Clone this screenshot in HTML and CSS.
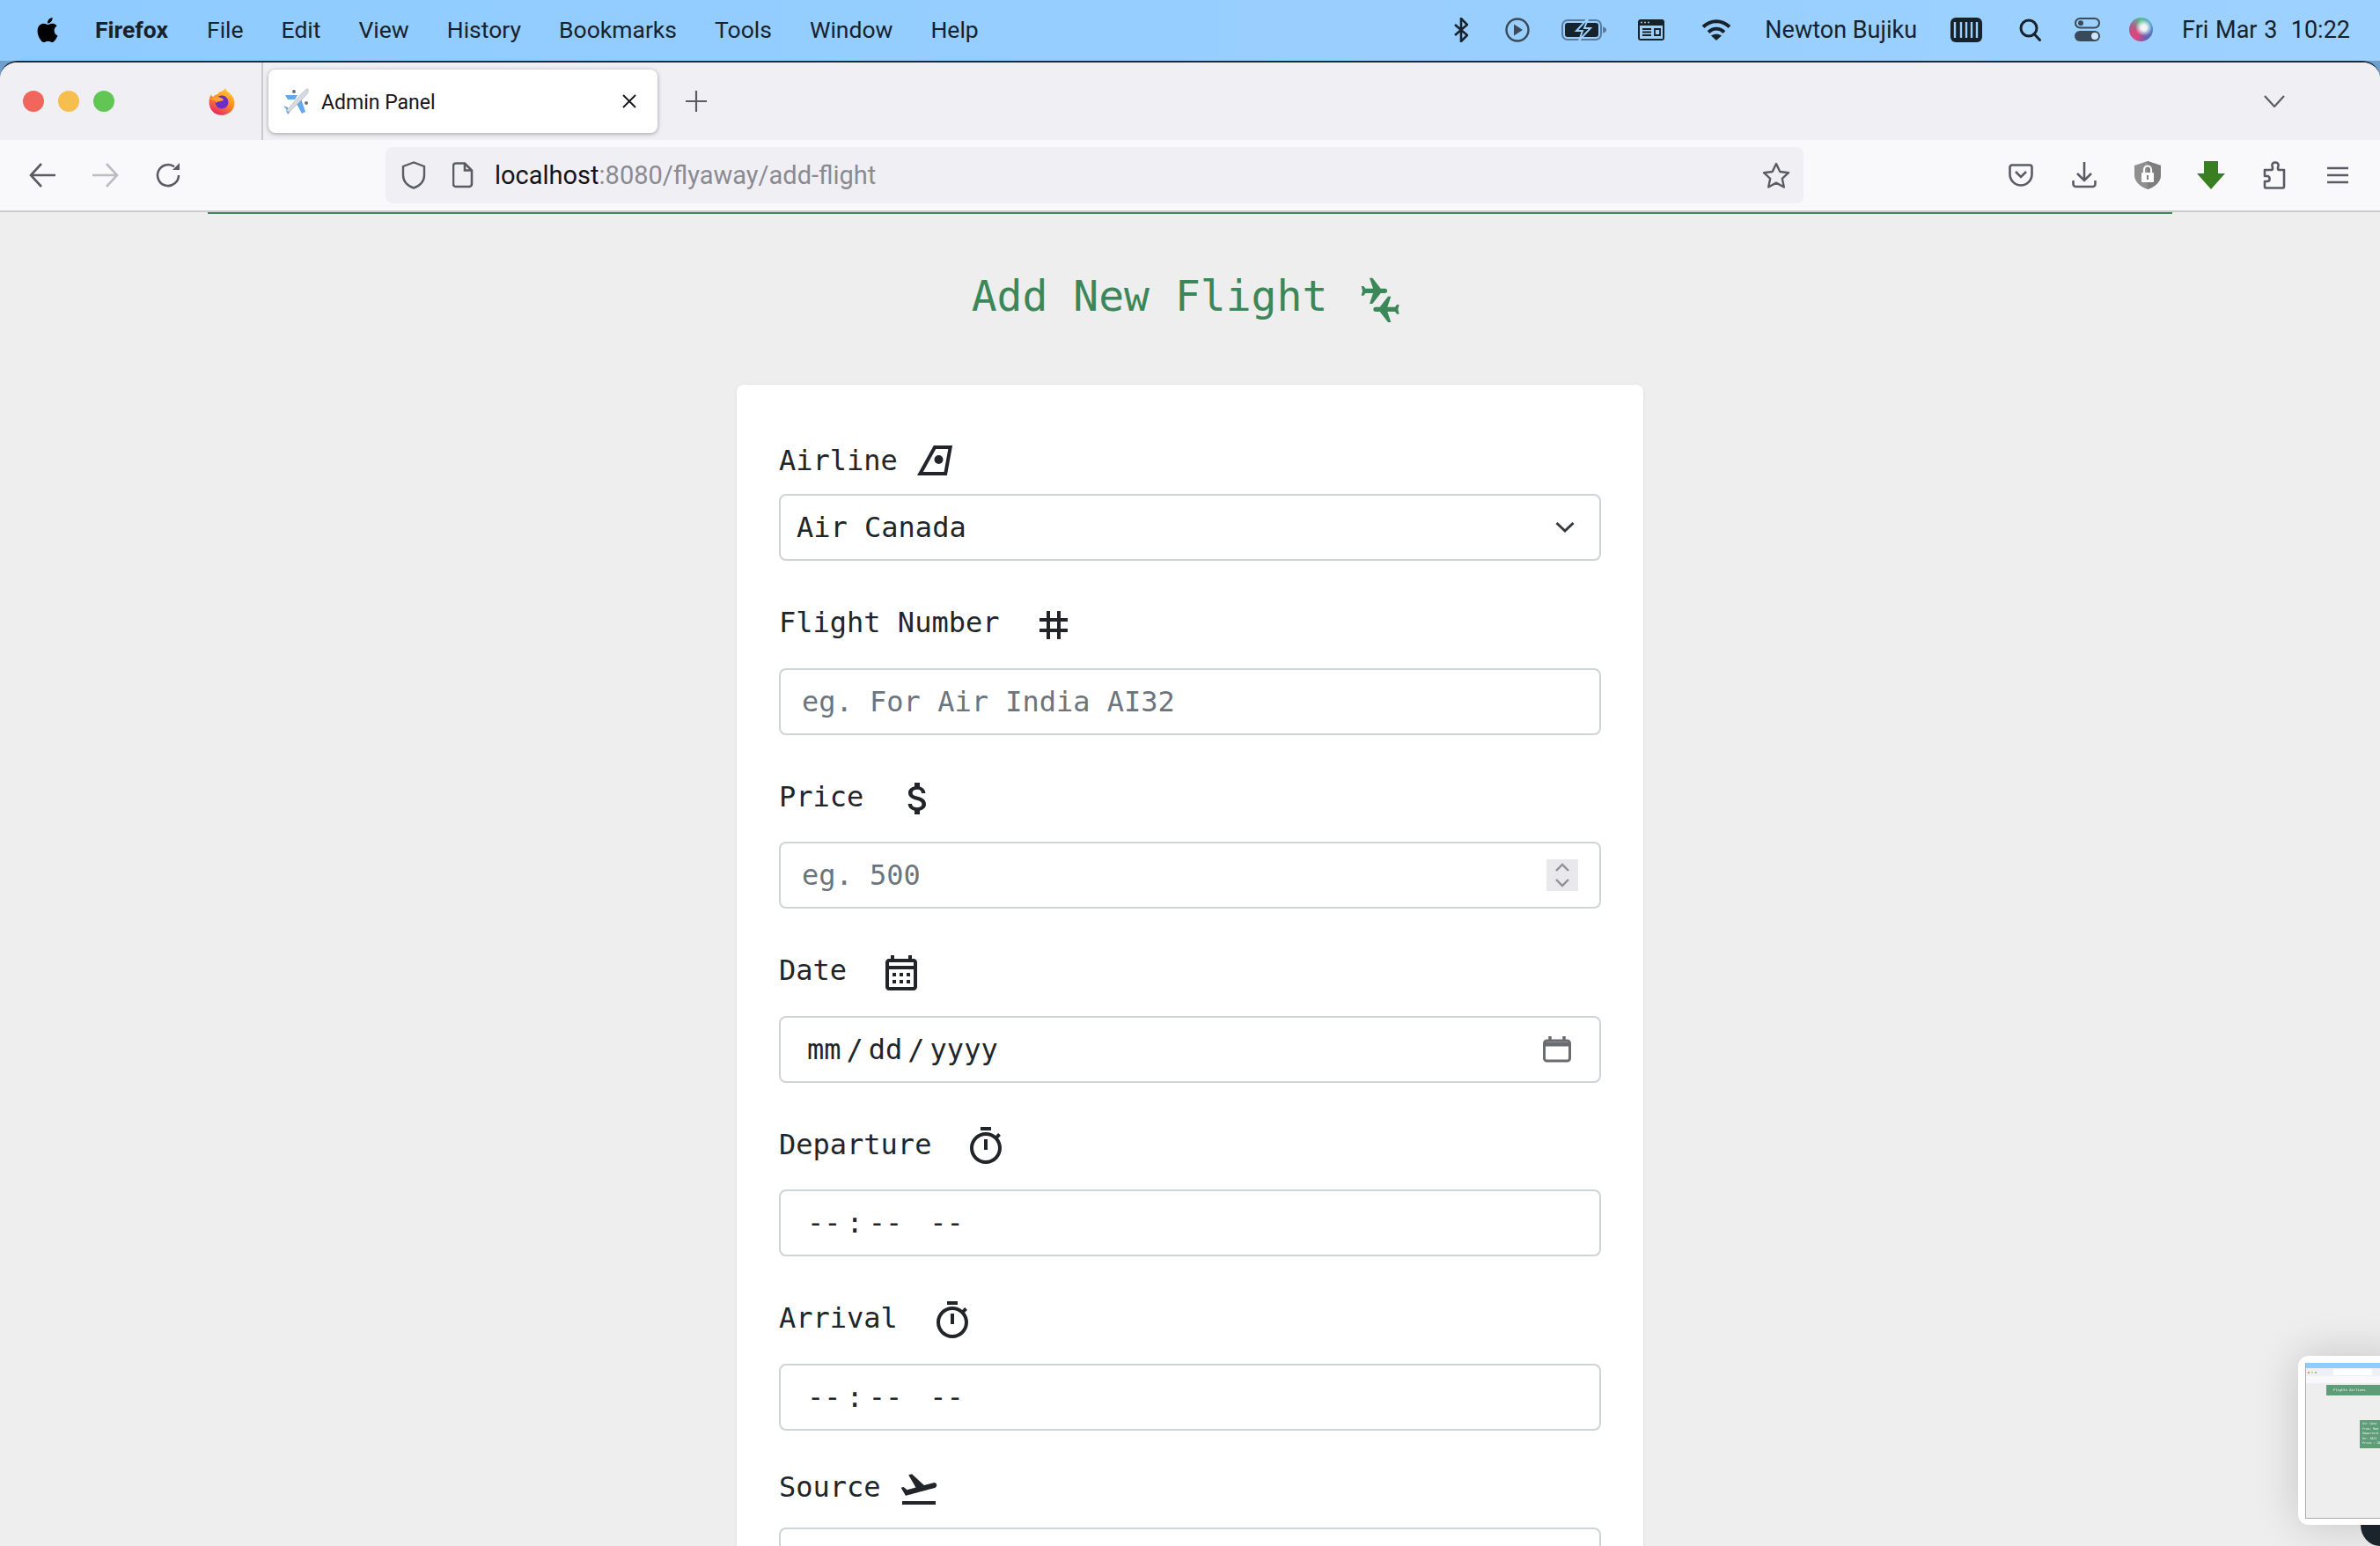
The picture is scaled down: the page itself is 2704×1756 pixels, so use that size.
FILE: index.html

```html
<!DOCTYPE html>
<html lang="en">
<head>
  <meta charset="UTF-8" />
  <title>Admin Panel</title>
  <link rel="stylesheet" href="styles.css">
</head>
<body>
  <header class="menubar">
    <div class="menu-left">
      <svg class="apple" viewBox="0 0 24 24"><path d="M12.152 6.896c-.948 0-2.415-1.078-3.96-1.04-2.04.027-3.91 1.183-4.961 3.014-2.117 3.675-.546 9.103 1.519 12.09 1.013 1.454 2.208 3.09 3.792 3.039 1.52-.065 2.09-.987 3.935-.987 1.831 0 2.35.987 3.96.948 1.637-.026 2.676-1.48 3.676-2.948 1.156-1.688 1.636-3.325 1.662-3.415-.039-.013-3.182-1.221-3.22-4.857-.026-3.04 2.48-4.494 2.597-4.559-1.429-2.09-3.623-2.324-4.39-2.376-2-.156-3.675 1.09-4.61 1.09zM15.53 3.83c.843-1.012 1.4-2.427 1.245-3.83-1.207.052-2.662.805-3.532 1.818-.78.896-1.454 2.338-1.273 3.714 1.338.104 2.715-.688 3.559-1.701"/></svg>
      <span class="app-name">Firefox</span>
      <span>File</span>
      <span>Edit</span>
      <span>View</span>
      <span>History</span>
      <span>Bookmarks</span>
      <span>Tools</span>
      <span>Window</span>
      <span>Help</span>
    </div>
    <div class="menu-right">
      <svg class="st-first" width="16" height="28" viewBox="0 0 16 28" fill="none" stroke="#18222b" stroke-width="2.6"><path d="M1 8l14 12-7 7V1l7 7L1 20"/></svg>
      <svg class="st-wide" width="28" height="28" viewBox="0 0 28 28"><circle cx="14" cy="14" r="12.5" fill="none" stroke="#3b4a58" stroke-width="2.4"/><path d="M10 7.5L20 14l-10 6.5z" fill="#3b4a58"/></svg>
      <svg class="st-mid" width="51" height="24" viewBox="0 0 51 24"><rect x="1" y="1" width="44" height="22" rx="6" fill="none" stroke="#5b7c9c" stroke-width="2"/><rect x="4" y="4" width="38" height="16" rx="3" fill="#18222b"/><path d="M47 8l4 2.500v3l-4 2.500z" fill="#5b7c9c"/><path d="M29 0L17 13h7l-4 11 13-14h-7l4-10z" fill="#18222b" stroke="#9cd0ff" stroke-width="2"/></svg>
      <svg class="st-mid" width="30" height="24" viewBox="0 0 30 24"><rect width="30" height="24" rx="3" fill="#18222b"/><rect x="2" y="7" width="26" height="15" fill="#9cd0ff"/><path d="M5 11h10M5 14.500h10M5 18h10M19 11h6v7h-6z" stroke="#18222b" stroke-width="1.800" fill="none"/><circle cx="4" cy="3.500" r="1" fill="#9cd0ff"/><circle cx="8" cy="3.500" r="1" fill="#9cd0ff"/><circle cx="12" cy="3.500" r="1" fill="#9cd0ff"/></svg>
      <svg class="st-wide" width="34" height="24" viewBox="0 0 34 24" fill="none" stroke="#18222b" stroke-width="4"><path d="M2 8.500C11 0 23 0 32 8.500"/><path d="M8 14.500c5.500-5 12.500-5 18 0"/><path d="M17 24l-6-5.500c3.500-2.500 8.500-2.500 12 0z" fill="#18222b" stroke="none"/></svg>
      <span class="st status-text">Newton Bujiku</span>
      <svg class="st" width="36" height="28" viewBox="0 0 36 28"><rect width="36" height="28" rx="6" fill="#18222b"/><path d="M5 5v18M12 5v18M18 5v18M24 5v18M30 5v18" stroke="#9cd0ff" stroke-width="2.400"/></svg>
      <svg class="st-wide" width="25" height="26" viewBox="0 0 25 26" fill="none" stroke="#18222b" stroke-width="3"><circle cx="11" cy="11" r="9"/><path d="M17 17.500l6.500 7" stroke-linecap="round"/></svg>
      <svg class="st" width="29" height="27" viewBox="0 0 29 27"><rect x="1" y="1" width="27" height="10.500" rx="5.200" fill="none" stroke="#3b4a58" stroke-width="2"/><circle cx="7" cy="6.200" r="3" fill="#3b4a58"/><rect y="15" width="29" height="12" rx="6" fill="#3b4a58"/><circle cx="23" cy="21" r="4" fill="#cfe6fb"/></svg>
      <div class="siri st-tight"></div>
      <span class="st-tight status-text clock">Fri Mar 3  10:22</span>
    </div>
  </header>

  <div class="window">
    <div class="tabbar">
      <div class="lights">
        <span class="light light-red"></span>
        <span class="light light-yellow"></span>
        <span class="light light-green"></span>
      </div>
      <svg class="ff-logo" width="30" height="31" viewBox="0 0 30 31">
        <defs><linearGradient id="ffg" x1="0.8" y1="0" x2="0.3" y2="1"><stop offset="0" stop-color="#ffd43a"/><stop offset="0.5" stop-color="#ff8a1f"/><stop offset="1" stop-color="#e5246b"/></linearGradient></defs>
        <path d="M19 0c1 4 5 5 8 9 4 6 3 14-2 18-6 5-15 5-20 0C0 22-1 14 3 7c0 2 1 3 2 3 2-2 4-3 6-3-1-3 5-2 8-7z" fill="url(#ffg)"/>
        <circle cx="15" cy="16" r="7.500" fill="#6b2fc7"/>
        <path d="M2 13c3-3 8-4 12-2 2 1 3 2 3 3-3 1-7 1-9 3 1-3-3-4-6-4z" fill="#ffa22e"/>
      </svg>
      <div class="tab-sep"></div>
      <div class="tab">
        <svg width="30" height="31" viewBox="0 0 30 31">
          <path d="M3 8h14l-3 5-8 0zM21 12l5 15-4 2-6-11z" fill="#63a9ec"/>
          <path d="M1 20l5 2 1 6-6-8zM4 26l6-1-4 5z" fill="#63a9ec"/>
          <path d="M29 1c1 3-1 6-3 8L8 27l-4-1L21 7c2-2 5-6 8-6z" fill="#d5dbe0" stroke="#a9b2ba" stroke-width="0.6"/>
          <circle cx="13" cy="4" r="2" fill="#6b7278"/><circle cx="27" cy="17" r="2" fill="#6b7278"/>
        </svg>
        <span class="tab-title">Admin Panel</span>
        <svg class="tab-close" width="16" height="16" viewBox="0 0 16 16" fill="none" stroke="#15141a" stroke-width="1.800"><path d="M1 1l14 14M15 1L1 15"/></svg>
      </div>
      <svg class="tab-plus" width="24" height="24" viewBox="0 0 24 24" fill="none" stroke="#5b5b66" stroke-width="2.200"><path d="M12 0v24M0 12h24"/></svg>
      <svg class="tab-list" width="24" height="14" viewBox="0 0 24 14" fill="none" stroke="#5b5b66" stroke-width="2.200"><path d="M1 1l11 12L23 1"/></svg>
    </div>

    <div class="toolbar">
      <div class="tool"><svg width="30" height="28" viewBox="0 0 30 28" fill="none" stroke="#5b5b66" stroke-width="2.600"><path d="M14 1L2 14l12 13M2 14h28"/></svg></div>
      <div class="tool"><svg width="30" height="28" viewBox="0 0 30 28" fill="none" stroke="#bcbcc2" stroke-width="2.600"><path d="M16 1l12 13-12 13M28 14H0"/></svg></div>
      <div class="tool"><svg width="30" height="30" viewBox="0 0 30 30" fill="none" stroke="#5b5b66" stroke-width="2.600"><path d="M26 15a12 12 0 1 1-5-9.700"/><path d="M27 1v8h-8z" fill="#5b5b66" stroke="none"/></svg></div>
      <div class="urlbar">
        <svg class="url-shield" width="28" height="32" viewBox="0 0 28 32" fill="none" stroke="#5b5b66" stroke-width="2.400"><path d="M14 1.500L2 6v10c0 7 5 12 12 14.500C21 28 26 23 26 16V6z"/></svg>
        <svg class="url-page" width="24" height="30" viewBox="0 0 24 30" fill="none" stroke="#5b5b66" stroke-width="2.600"><path d="M4 1.500h10l8 8V25a3 3 0 0 1-3 3H4a3 3 0 0 1-3-3V4a3 3 0 0 1 3-2.500zM14 1.500v8h8"/></svg>
        <span class="url-text"><span class="url-host">localhost</span>:8080/flyaway/add-flight</span>
        <svg class="url-star" width="32" height="30" viewBox="0 0 32 30" fill="none" stroke="#5b5b66" stroke-width="2.400" stroke-linejoin="round"><path d="M16 2l4.300 9 9.700 1.200-7.200 6.600 2 9.700L16 23.600l-8.800 4.900 2-9.700L2 12.200 11.700 11z"/></svg>
      </div>
      <div class="tools-right">
        <div class="tool"><svg width="28" height="26" viewBox="0 0 28 26" fill="none" stroke="#5b5b66" stroke-width="2.600"><path d="M4 1.500h20a2.500 2.500 0 0 1 2.500 2.500v8c0 7-6 12.500-12.500 12.500S1.500 19 1.500 12V4A2.500 2.500 0 0 1 4 1.500z"/><path d="M8 9l6 6 6-6"/></svg></div>
        <div class="tool"><svg width="28" height="30" viewBox="0 0 28 30" fill="none" stroke="#5b5b66" stroke-width="2.600"><path d="M14 0v21M6 13l8 8 8-8M1.500 21v4a3 3 0 0 0 3 3h19a3 3 0 0 0 3-3v-4"/></svg></div>
        <div class="tool"><svg width="30" height="32" viewBox="0 0 30 32"><path d="M15 0L0 5v11c0 7 6 13 15 16 9-3 15-9 15-16V5z" fill="#8f8f8f"/><path d="M15 0v32c9-3 15-9 15-16V5z" fill="#7d7d7d"/><rect x="8" y="13" width="14" height="11" rx="1" fill="#fff"/><path d="M11 13V9.500a4 4 0 0 1 8 0V13" fill="none" stroke="#fff" stroke-width="2.200"/><rect x="14" y="16" width="2" height="5" fill="#7d7d7d"/></svg></div>
        <div class="tool"><svg width="32" height="32" viewBox="0 0 32 32"><path d="M8 0h16v14h8L16 32 0 14h8z" fill="#3a7e22"/></svg></div>
        <div class="tool"><svg width="26" height="32" viewBox="0 0 26 32" fill="none" stroke="#5b5b66" stroke-width="2.600" stroke-linejoin="round"><path d="M2 10h7c3 0 2-3 1.500-4.500C10 3 11.500 1.500 14 1.500S18 3 17.500 5.500C17 7 16 10 19 10h5v19a1.500 1.500 0 0 1-1.500 1.500H3.500A1.500 1.500 0 0 1 2 29v-6h3c3.500 0 3.500-6 0-6H2z"/></svg></div>
        <div class="tool"><svg width="24" height="20" viewBox="0 0 24 20" fill="none" stroke="#5b5b66" stroke-width="2.600"><path d="M0 2h24M0 10h24M0 18h24"/></svg></div>
      </div>
    </div>

    <main class="page">
      <div class="nav-edge"></div>
      <h2 class="page-title">
        <span class="page-title-text">Add New Flight</span>
        <svg width="80" height="80" viewBox="0 0 240 240" fill="#3b8759">
          <path d="M80 102h8l6 8h26l-12-36h10l28 36h14a8 8 0 0 1 0 16h-14l-28 36h-10l12-36H94l-6 8h-8l4-16z"/>
          <path transform="translate(165 181) rotate(180) translate(-124 -118)" d="M80 102h8l6 8h26l-12-36h10l28 36h14a8 8 0 0 1 0 16h-14l-28 36h-10l12-36H94l-6 8h-8l4-16z"/>
        </svg>
      </h2>

      <form class="card" onsubmit="return false;">
        <div class="field">
          <label class="field-label field-label-short">Airline
            <svg class="icon-tight" width="40" height="34" viewBox="0 0 40 34" fill="none" stroke="#212529" stroke-width="4"><path d="M20 2h17.700l-5.500 30H3.400z"/><circle cx="24.500" cy="16" r="5" fill="#212529" stroke="none"/></svg>
          </label>
          <div class="box box-select">
            <span>Air Canada</span>
            <svg width="22" height="14" viewBox="0 0 22 14" fill="none" stroke="#343a40" stroke-width="3"><path d="M1.500 2L11 11l9.500-9"/></svg>
          </div>
        </div>

        <div class="field">
          <label class="field-label">Flight Number
            <svg class="icon" width="48" height="48" viewBox="0 0 24 24" fill="#212529"><path d="M20 10V8h-4V4h-2v4h-4V4H8v4H4v2h4v4H4v2h4v4h2v-4h4v4h2v-4h4v-2h-4v-4h4zm-6 4h-4v-4h4v4z"/></svg>
          </label>
          <div class="box"><input class="box-input" type="text" placeholder="eg. For Air India AI32"></div>
        </div>

        <div class="field">
          <label class="field-label">Price
            <svg class="icon" width="48" height="48" viewBox="0 0 24 24" fill="#212529"><path d="M11.800 10.900c-2.270-.590-3-1.200-3-2.150 0-1.090 1.010-1.850 2.700-1.850 1.780 0 2.440.850 2.500 2.100h2.210c-.070-1.720-1.120-3.300-3.210-3.810V3h-3v2.160c-1.940.420-3.500 1.680-3.500 3.610 0 2.310 1.910 3.460 4.700 4.130 2.500.600 3 1.480 3 2.410 0 .690-.490 1.790-2.700 1.790-2.060 0-2.870-.920-2.980-2.100h-2.200c.120 2.190 1.760 3.420 3.680 3.830V21h3v-2.150c1.950-.370 3.500-1.500 3.500-3.550 0-2.840-2.430-3.810-4.700-4.400z"/></svg>
          </label>
          <div class="box">
            <input class="box-input" type="text" placeholder="eg. 500">
            <span class="stepper">
              <svg width="16" height="30" viewBox="0 0 16 30" fill="none" stroke="#8f8f9d" stroke-width="2.400"><path d="M1 10l7-7 7 7M1 20l7 7 7-7"/></svg>
            </span>
          </div>
        </div>

        <div class="field">
          <label class="field-label">Date
            <svg class="icon" width="48" height="48" viewBox="0 0 24 24" fill="#212529"><path d="M19 4h-1V2h-2v2H8V2H6v2H5c-1.110 0-1.990.9-1.990 2L3 20c0 1.100.89 2 2 2h14c1.100 0 2-.9 2-2V6c0-1.100-.9-2-2-2zm0 16H5V10h14v10zm0-12H5V6h14v2zM9 14H7v-2h2v2zm4 0h-2v-2h2v2zm4 0h-2v-2h2v2zm-8 4H7v-2h2v2zm4 0h-2v-2h2v2zm4 0h-2v-2h2v2z"/></svg>
          </label>
          <div class="box box-segments">
            <span class="segs"><span>mm</span><span class="sep">/</span><span>dd</span><span class="sep">/</span><span>yyyy</span></span>
            <svg class="date-btn" width="32" height="30" viewBox="0 0 32 30" fill="none" stroke="#6b6b72" stroke-width="3"><rect x="1.500" y="5" width="29" height="23" rx="3"/><path d="M2 9h28" stroke-width="5"/><path d="M8 0v5M24 0v5" stroke-width="3.500"/></svg>
          </div>
        </div>

        <div class="field">
          <label class="field-label">Departure
            <svg class="icon" width="48" height="48" viewBox="0 0 24 24" fill="#212529"><path d="M15 1H9v2h6V1zm-4 13h2V8h-2v6zm8.030-6.610l1.420-1.420c-.43-.51-.9-.99-1.410-1.410l-1.420 1.420C16.070 4.740 14.120 4 12 4c-4.970 0-9 4.030-9 9s4.020 9 9 9 9-4.030 9-9c0-2.120-.74-4.070-1.970-5.610zM12 20c-3.870 0-7-3.130-7-7s3.130-7 7-7 7 3.130 7 7-3.130 7-7 7z"/></svg>
          </label>
          <div class="box box-segments">
            <span class="segs"><span>--</span><span class="sep">:</span><span>--</span><span class="ampm">--</span></span>
          </div>
        </div>

        <div class="field">
          <label class="field-label">Arrival
            <svg class="icon" width="48" height="48" viewBox="0 0 24 24" fill="#212529"><path d="M15 1H9v2h6V1zm-4 13h2V8h-2v6zm8.030-6.610l1.420-1.420c-.43-.51-.9-.99-1.410-1.410l-1.420 1.420C16.070 4.740 14.120 4 12 4c-4.970 0-9 4.030-9 9s4.020 9 9 9 9-4.030 9-9c0-2.120-.74-4.070-1.970-5.610zM12 20c-3.870 0-7-3.130-7-7s3.130-7 7-7 7 3.130 7 7-3.130 7-7 7z"/></svg>
          </label>
          <div class="box box-segments">
            <span class="segs"><span>--</span><span class="sep">:</span><span>--</span><span class="ampm">--</span></span>
          </div>
        </div>

        <div class="field">
          <label class="field-label field-label-source">Source
            <svg class="icon-tight-source" width="48" height="48" viewBox="0 0 24 24" fill="#212529"><path d="M2.500 19h19v2h-19zm19.570-9.360c-.21-.8-1.040-1.280-1.840-1.060L14.920 10l-6.900-6.430-1.930.51 4.140 7.170-4.970 1.330-1.970-1.540-1.450.39 2.590 4.490s7.120-1.900 16.570-4.430c.81-.23 1.280-1.050 1.070-1.850z"/></svg>
          </label>
          <div class="box"></div>
        </div>
      </form>
    </main>
  </div>

  <aside class="thumb">
    <div class="thumb-shot">
      <div class="thumb-menu"></div>
      <div class="thumb-tabs">
        <span class="thumb-dot thumb-red"></span>
        <span class="thumb-dot thumb-yellow"></span>
        <span class="thumb-dot thumb-green"></span>
        <span class="thumb-tab"></span>
      </div>
      <div class="thumb-tools"></div>
      <div class="thumb-nav">Flights&nbsp;Airlines</div>
      <div class="thumb-card">Air Cana<br>From: Mad<br>Departure<br>On: 2023<br>Price : 10</div>
    </div>
  </aside>
  <div class="thumb-corner"></div>
</body>
</html>
```

FILE: styles.css

```css
html, body { margin: 0; height: 100%; overflow: hidden; }
body { font-family: Roboto, "Liberation Sans", sans-serif; background: #6f9fca; color: #18222b; }

.menubar { height: 69px; box-sizing: border-box; padding: 0 34px 2px 40px; display: flex; justify-content: space-between; align-items: center; font-size: 26.5px; background: linear-gradient(90deg, #8fcbff, #9dd1ff); }
.menu-left { display: flex; align-items: center; gap: 43px; }
.apple { width: 28px; height: 32px; margin-right: -3px; }
.app-name { font-weight: 700; margin-right: 1px; }
.menu-right { display: flex; align-items: center; }
.st { margin-left: 38px; }
.st-wide { margin-left: 42px; }
.st-mid { margin-left: 36px; }
.st-tight { margin-left: 33px; }
.status-text { font-size: 27px; }
.clock { white-space: pre; word-spacing: 1px; }
.siri { width: 27px; height: 27px; border-radius: 50%; background: radial-gradient(circle at 62% 42%, #f4f4f4 0 14%, transparent 42%), conic-gradient(#54c08a, #3f8fd0, #6a5fb0, #e0457a, #b25a8a, #54c08a); }

.window { height: calc(100vh - 69px); display: flex; flex-direction: column; border-top: 2px solid #1f2c38; border-radius: 20px 20px 0 0; overflow: hidden; background: #eee; }
.tabbar { height: 88px; flex: none; display: flex; align-items: center; background: #f0f0f4; padding-left: 26px; }
.lights { display: flex; gap: 16px; }
.light { width: 24px; height: 24px; border-radius: 50%; }
.light-red { background: #f1665c; }
.light-yellow { background: #f6bd4f; }
.light-green { background: #62c654; }
.ff-logo { margin-left: 107px; }
.tab-sep { width: 2px; height: 88px; background: #c9c9ce; margin-left: 30px; }
.tab { width: 442px; height: 72px; margin-left: 6px; padding: 0 24px 0 16px; box-sizing: border-box; display: flex; align-items: center; background: #fff; border-radius: 8px; box-shadow: 0 1px 5px rgba(0, 0, 0, 0.35); }
.tab-title { font-size: 23px; color: #15141a; margin-left: 14px; padding-top: 2px; flex: 1; }
.tab-plus { margin-left: 32px; }
.tab-list { margin-left: auto; margin-right: 108px; }

.toolbar { height: 80px; flex: none; display: flex; align-items: center; background: #f9f9fb; padding: 0 12px; border-bottom: 2px solid #ccc; }
.tool { width: 72px; display: flex; justify-content: center; align-items: center; }
.tools-right { display: flex; margin-left: auto; }
.urlbar { width: 1611px; height: 64px; margin-left: 210px; display: flex; align-items: center; background: #f0f0f4; border-radius: 8px; }
.url-shield { margin-left: 18px; }
.url-page { margin-left: 30px; }
.url-text { margin-left: 24px; font-size: 29px; color: #8a8a92; flex: 1; }
.url-host { color: #15141a; }
.url-star { margin-right: 15px; }

.page { flex: 1; font-family: "DejaVu Sans Mono", "Liberation Mono", monospace; color: #212529; }
.nav-edge { width: 2232px; height: 2px; margin: 0 auto; background: #3f8a5c; }
.page-title { height: 96px; margin: 40px 0 58px; display: flex; justify-content: center; align-items: center; gap: 12px; font-size: 48px; font-weight: 400; color: #3b8759; }
.page-title-text { padding-top: 10px; }

.card { width: 1030px; margin: 0 auto; padding: 56px 48px; box-sizing: border-box; background: #fff; border-radius: 8px; box-shadow: 0 1px 4px rgba(0, 0, 0, 0.08); }
.field { margin-bottom: 32px; }
.field-label { height: 81.5px; box-sizing: border-box; padding-bottom: 5px; margin-bottom: 8px; display: flex; align-items: center; font-size: 32px; }
.field-label-short { height: 60px; padding-bottom: 0; }
.field-label-source { height: 70px; }
.icon { margin: 5px 0 0 38px; }
.icon-tight { margin-left: 22px; }
.icon-tight-source { margin: 3px 0 0 19px; }

.box { height: 76px; box-sizing: border-box; display: flex; align-items: center; justify-content: space-between; border: 2px solid #ced4da; border-radius: 8px; font-size: 32px; }
.box-select { padding: 0 28px 0 18px; }
.box-input { flex: 1; height: 100%; min-width: 0; border: 0; padding: 0 0 0 24px; background: transparent; outline: 0; font: inherit; color: #212529; }
.box-input::placeholder { color: #6c757d; opacity: 1; }
.box-segments { padding: 0 32px 0 30px; }
.segs { display: flex; }
.sep { margin: 0 6px; }
.ampm { margin-left: 31px; }
.stepper { width: 36px; height: 36px; margin-right: 24px; display: flex; align-items: center; justify-content: center; background: #e9e8ed; }

.thumb { position: absolute; left: 2611px; top: 1540px; width: 120px; height: 192px; padding: 8px 0 8px 8px; box-sizing: border-box; background: #fff; border-radius: 12px 0 0 12px; box-shadow: 0 0 50px rgba(0, 0, 0, 0.18); }
.thumb-shot { height: 100%; background: #eee; border-left: 1px solid #aaa; border-bottom: 1px solid #aaa; overflow: hidden; filter: blur(0.5px); font-family: "DejaVu Sans Mono", monospace; color: #f2f7f4; white-space: nowrap; }
.thumb-menu { height: 6px; background: #90cbff; }
.thumb-tabs { height: 9px; padding-left: 2px; display: flex; align-items: center; gap: 2px; background: #f0f0f4; }
.thumb-dot { width: 2px; height: 2px; border-radius: 50%; }
.thumb-red { background: #f1665c; }
.thumb-yellow { background: #f6bd4f; }
.thumb-green { background: #62c654; }
.thumb-tab { width: 44px; height: 7px; margin-left: 17px; background: #fff; }
.thumb-tools { height: 8px; background: #f9f9fb; }
.thumb-nav { height: 12px; margin: 2px 0 0 23px; padding-left: 8px; background: #5f9c78; font-size: 3.8px; line-height: 12px; }
.thumb-card { height: 32px; margin: 28px 0 0 61px; padding: 2px 3px; box-sizing: border-box; background: #5f9c78; font-size: 3.4px; line-height: 5.5px; }
.thumb-corner { position: absolute; right: 0; bottom: 0; width: 22px; height: 24px; background: #1b242b; border-bottom-left-radius: 100%; }
```
